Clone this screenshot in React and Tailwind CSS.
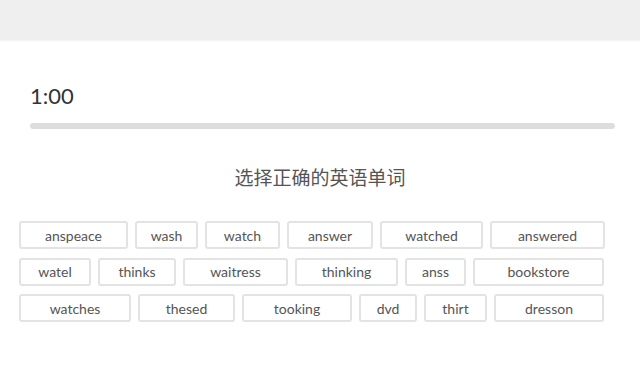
import React from 'react';

const rows = [
  [['anspeace', 109], ['wash', 63], ['watch', 75], ['answer', 86], ['watched', 103], ['answered', 115]],
  [['watel', 72], ['thinks', 78], ['waitress', 105], ['thinking', 103], ['anss', 61], ['bookstore', 131]],
  [['watches', 112], ['thesed', 97], ['tooking', 110], ['dvd', 58], ['thirt', 63], ['dresson', 110]],
];

const widthClass = {
  58: 'w-[58px]', 61: 'w-[61px]', 63: 'w-[63px]', 72: 'w-[72px]', 75: 'w-[75px]', 78: 'w-[78px]',
  86: 'w-[86px]', 97: 'w-[97px]', 103: 'w-[103px]', 105: 'w-[105px]', 109: 'w-[109px]',
  110: 'w-[110px]', 112: 'w-[112px]', 115: 'w-[115px]', 131: 'w-[131px]',
};

const App = () => {
  return (
    <div className="w-[640px] h-[380px] bg-white overflow-hidden font-['Lato','Liberation_Sans',sans-serif]">
      <div className="h-[40px] bg-[#efefef] shadow-[0_1px_2px_rgba(0,0,0,0.06)]" />

      <div className="px-[30px] pt-[43px]">
        <div className="text-[22px] leading-[26px] text-[#333]">1:00</div>
        <div className="mt-[14px] h-[6px] w-[585px] rounded-full bg-[#dddddd]" />
      </div>

      <div className="mt-[36px] text-center text-[19px] leading-[24px] text-[#555] font-['Noto_Sans_CJK_SC',sans-serif]">
        选择正确的英语单词
      </div>

      <div className="mt-[32px] pl-[19px] flex flex-col gap-[8.5px]">
        {rows.map((row, i) => (
          <div key={i} className="flex gap-[7px]">
            {row.map(([word, w]) => (
              <button
                key={word}
                className={`${widthClass[w]} h-[28px] rounded-[3px] border-2 border-[#e3e3e3] bg-white text-[14px] text-[#555]`}
              >
                {word}
              </button>
            ))}
          </div>
        ))}
      </div>
    </div>
  );
};

export default App;
